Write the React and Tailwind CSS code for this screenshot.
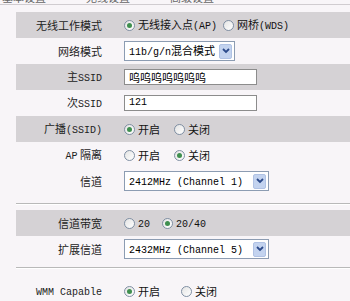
import React from 'react';

const Mono = ({ children }) => (
  <span className="font-['Liberation_Mono',monospace] text-[10px]">{children}</span>
);

const Radio = ({ checked, children, className = '' }) => (
  <span className={`flex items-center ${className}`}>
    <span className="w-[11px] h-[11px] rounded-full border border-[#7f8fa3] bg-gradient-to-br from-[#e4e4e4] to-white flex items-center justify-center shrink-0">
      {checked && <span className="w-[5px] h-[5px] rounded-full bg-[#3f8f4f]"></span>}
    </span>
    <span className="ml-[3px] text-[#111]">{children}</span>
  </span>
);

const Select = ({ children, width }) => (
  <div className={`h-[20px] ${width} border border-[#8c9cb2] bg-white flex items-center justify-between pl-[4px] pr-[2px]`}>
    <span className="whitespace-pre">{children}</span>
    <span className="w-[13px] h-[15px] rounded-[2px] bg-[#c3d3ef] border border-[#b0c2e4] flex items-center justify-center">
      <svg width="8" height="6" viewBox="0 0 8 6">
        <path d="M1 1 L4 4 L7 1" stroke="#2b4a8a" strokeWidth="1.8" fill="none" />
      </svg>
    </span>
  </div>
);

const Input = ({ children }) => (
  <div className="h-[16px] w-[133px] border border-[#8c8c8c] bg-white flex items-center pl-[4px]">
    {children}
  </div>
);

const Row = ({ label, gray, children }) => (
  <div className={`flex items-center h-[26px] ${gray ? 'bg-[#d5d2d5]' : ''}`}>
    <div className="w-[94px] text-right pr-[8px] text-[#222]">{label}</div>
    <div className="flex-1 pl-[14px] flex items-center">{children}</div>
  </div>
);

const Sep = () => (
  <div className="ml-[16px] border-t border-[#b9b9b9] border-b border-b-white"></div>
);

export default function App() {
  return (
    <div className="w-[350px] h-[301px] overflow-hidden bg-[#f8f5f8] font-['Noto_Sans_CJK_SC',sans-serif] text-[11px] leading-none">
      {/* header tabs, cut off at the top edge */}
      <div className="h-[5px] overflow-hidden border-b border-[#d0ccd0] text-[#666] flex gap-[40px] pl-[2px]">
        <span className="-mt-[8px]">基本设置</span>
        <span className="-mt-[8px]">无线设置</span>
        <span className="-mt-[8px]">高级设置</span>
      </div>
      <div className="pt-[7px] pl-[16px]">
        <Row label="无线工作模式" gray>
          <Radio checked>无线接入点<Mono>(AP)</Mono></Radio>
          <Radio className="ml-[6px]">网桥<Mono>(WDS)</Mono></Radio>
        </Row>
        <Row label="网络模式">
          <Select width="w-[111px]"><Mono>11b/g/n</Mono>混合模式</Select>
        </Row>
        <Row label={<>主<Mono>SSID</Mono></>} gray>
          <Input>呜呜呜呜呜呜呜</Input>
        </Row>
        <Row label={<>次<Mono>SSID</Mono></>}>
          <Input><Mono>121</Mono></Input>
        </Row>
        <Row label={<>广播<Mono>(SSID)</Mono></>} gray>
          <Radio checked>开启</Radio>
          <Radio className="ml-[14px]">关闭</Radio>
        </Row>
        <Row label={<><Mono>AP</Mono> 隔离</>}>
          <Radio>开启</Radio>
          <Radio checked className="ml-[14px]">关闭</Radio>
        </Row>
        <Row label="信道">
          <Select width="w-[145px]"><Mono>2412MHz (Channel 1)</Mono></Select>
        </Row>
      </div>
      <div className="h-[9px]"></div>
      <Sep />
      <div className="pt-[5px] pl-[16px]">
        <Row label="信道带宽" gray>
          <Radio><Mono>20</Mono></Radio>
          <Radio checked className="ml-[12px]"><Mono>20/40</Mono></Radio>
        </Row>
        <Row label="扩展信道">
          <Select width="w-[145px]"><Mono>2432MHz (Channel 5)</Mono></Select>
        </Row>
      </div>
      <div className="h-[5px]"></div>
      <Sep />
      <div className="pt-[9px] pl-[16px]">
        <Row label={<Mono>WMM Capable</Mono>}>
          <Radio checked>开启</Radio>
          <Radio className="ml-[21px]">关闭</Radio>
        </Row>
      </div>
    </div>
  );
}
